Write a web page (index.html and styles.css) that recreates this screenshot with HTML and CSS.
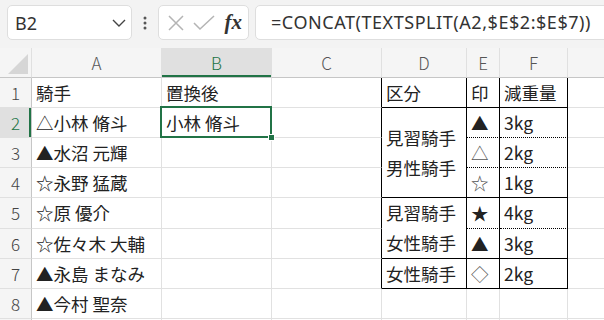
FILE: index.html
```html
<!DOCTYPE html>
<html>

<head>
    <title>減量騎手 置換</title>
    <link rel="stylesheet" href="styles.css">
</head>

<body>

    <div id="toolbar">
        <div id="name-box">
            <span>B2</span>
            <svg class="chev" width="14" height="8" viewBox="0 0 14 8"><polyline points="1,1 7,7 13,1" fill="none" stroke="#444" stroke-width="1.4"/></svg>
        </div>
        <div id="grip">
            <svg width="4" height="14" viewBox="0 0 4 14"><circle cx="2" cy="2" r="1.5" fill="#555"/><circle cx="2" cy="7" r="1.5" fill="#555"/><circle cx="2" cy="12" r="1.5" fill="#555"/></svg>
        </div>
        <div id="fx-buttons">
            <svg width="16" height="16" viewBox="0 0 16 16"><path d="M1 1 L15 15 M15 1 L1 15" stroke="#b4b4b4" stroke-width="1.5" fill="none"/></svg>
            <svg width="22" height="16" viewBox="0 0 22 16"><polyline points="1,8 7,14 21,1" stroke="#b4b4b4" stroke-width="1.5" fill="none"/></svg>
            <span class="fx">fx</span>
        </div>
        <div id="formula">=CONCAT(TEXTSPLIT(A2,$E$2:$E$7))</div>
    </div>

    <table id="sheet">
        <colgroup>
            <col class="w-rh"><col class="w-a"><col class="w-b"><col class="w-c">
            <col class="w-d"><col class="w-e"><col class="w-f"><col class="w-g">
        </colgroup>
        <thead>
            <tr>
                <th class="corner"><span class="tri"></span></th>
                <th>A</th>
                <th class="cur">B</th>
                <th>C</th>
                <th>D</th>
                <th>E</th>
                <th>F</th>
                <th></th>
            </tr>
        </thead>
        <tbody>
            <tr>
                <th>1</th>
                <td>騎手</td>
                <td>置換後</td>
                <td class="rb"></td>
                <td class="rb bb">区分</td>
                <td class="rb bb">印</td>
                <td class="rb bb">減重量</td>
                <td></td>
            </tr>
            <tr>
                <th class="cur">2</th>
                <td>△小林 脩斗</td>
                <td class="sel">小林 脩斗<span class="sel-box"></span><span class="handle"></span></td>
                <td class="rb"></td>
                <td class="rb bb multi" rowspan="3">見習騎手<br>男性騎手</td>
                <td class="rb bd mark">▲</td>
                <td class="rb bd">3kg</td>
                <td></td>
            </tr>
            <tr>
                <th>3</th>
                <td>▲水沼 元輝</td>
                <td></td>
                <td class="rb"></td>
                <td class="rb bd mark light">△</td>
                <td class="rb bd">2kg</td>
                <td></td>
            </tr>
            <tr>
                <th>4</th>
                <td>☆永野 猛蔵</td>
                <td></td>
                <td class="rb"></td>
                <td class="rb bb mark light">☆</td>
                <td class="rb bb">1kg</td>
                <td></td>
            </tr>
            <tr>
                <th>5</th>
                <td>☆原 優介</td>
                <td></td>
                <td class="rb"></td>
                <td class="rb bb multi" rowspan="2">見習騎手<br>女性騎手</td>
                <td class="rb bd mark">★</td>
                <td class="rb bd">4kg</td>
                <td></td>
            </tr>
            <tr>
                <th>6</th>
                <td>☆佐々木 大輔</td>
                <td></td>
                <td class="rb"></td>
                <td class="rb bb mark">▲</td>
                <td class="rb bb">3kg</td>
                <td></td>
            </tr>
            <tr>
                <th>7</th>
                <td>▲永島 まなみ</td>
                <td></td>
                <td class="rb"></td>
                <td class="rb bb">女性騎手</td>
                <td class="rb bb mark light">◇</td>
                <td class="rb bb">2kg</td>
                <td></td>
            </tr>
            <tr>
                <th>8</th>
                <td>▲今村 聖奈</td>
                <td></td>
                <td></td>
                <td></td>
                <td></td>
                <td></td>
                <td></td>
            </tr>
            <tr>
                <th></th>
                <td></td><td></td><td></td><td></td><td></td><td></td><td></td>
            </tr>
        </tbody>
    </table>

</body>

</html>
```

FILE: styles.css
```css
body {
    margin: 0;
    overflow: hidden;
    background-color: #f3f3f3;
    font-family: "Noto Sans CJK JP", sans-serif;
    color: #222;
}

#toolbar {
    display: flex;
    align-items: center;
    height: 48px;
    padding: 5px 0 8px 7px;
    box-sizing: border-box;
    width: 680px;
}

#name-box {
    display: flex;
    align-items: center;
    justify-content: space-between;
    width: 125px;
    height: 35px;
    box-sizing: border-box;
    padding: 0 5px 0 7px;
    background-color: white;
    border: 1px solid #dedede;
    border-radius: 5px;
    font-family: "Noto Sans", sans-serif;
    font-size: 18px;
    color: #333;
}

#grip {
    display: flex;
    justify-content: center;
    width: 26px;
}

#fx-buttons {
    display: flex;
    align-items: center;
    justify-content: space-between;
    width: 91px;
    height: 35px;
    box-sizing: border-box;
    padding: 0 6px 0 9px;
    background-color: white;
    border: 1px solid #dedede;
    border-radius: 5px;
}

.fx {
    font-family: "Liberation Serif", serif;
    font-style: italic;
    font-weight: bold;
    font-size: 21px;
    color: #333;
}

#formula {
    flex: 1;
    height: 35px;
    margin-left: 6px;
    box-sizing: border-box;
    padding-left: 15px;
    line-height: 33px;
    background-color: white;
    border: 1px solid #dedede;
    border-radius: 5px;
    font-family: "Noto Sans", sans-serif;
    font-size: 18px;
    letter-spacing: 0.55px;
    color: #333;
}

#sheet {
    table-layout: fixed;
    border-collapse: separate;
    border-spacing: 0;
    width: 640px;
    background-color: white;
    font-size: 17.5px;
}

.w-rh { width: 32px; }
.w-a { width: 130px; }
.w-b { width: 110px; }
.w-c { width: 110px; }
.w-d { width: 85px; }
.w-e { width: 33px; }
.w-f { width: 68px; }
.w-g { width: 72px; }

#sheet th,
#sheet td {
    height: 30px;
    padding: 0;
    box-sizing: border-box;
    white-space: nowrap;
    overflow: hidden;
}

#sheet thead th {
    background-color: #f5f5f5;
    border-right: 1px solid #e0e0e0;
    border-bottom: 1px solid #c6c6c6;
    font-weight: 300;
    font-size: 17px;
    color: #555;
}

#sheet thead th.cur {
    background-color: #e0e0e0;
    color: #217346;
    box-shadow: inset 0 -2px 0 #217346;
}

.corner {
    position: relative;
}

.tri {
    position: absolute;
    right: 3px;
    bottom: 3px;
    width: 0;
    height: 0;
    border-left: 20px solid transparent;
    border-bottom: 20px solid #d6d6d6;
}

#sheet tbody th {
    background-color: #f5f5f5;
    border-right: 1px solid #c6c6c6;
    border-bottom: 1px solid #e0e0e0;
    font-weight: 300;
    font-size: 17px;
    color: #444;
}

#sheet tbody th.cur {
    background-color: #e0e0e0;
    color: #217346;
    box-shadow: inset -2px 0 0 #217346;
}

#sheet td {
    padding-left: 4px;
    border-right: 1px solid #e1e1e1;
    border-bottom: 1px solid #e1e1e1;
    color: #222;
}

#sheet td.rb { border-right-color: black; }
#sheet td.bb { border-bottom-color: black; }
#sheet td.bd { border-bottom: 1px dotted black; }

#sheet td.multi {
    line-height: 30px;
    vertical-align: middle;
}

#sheet td.mark {
    padding-left: 4px;
}

#sheet td.light {
    color: #555;
}

#sheet td.sel {
    position: relative;
    overflow: visible;
}

.sel-box {
    position: absolute;
    top: -2px;
    left: -2px;
    right: -1px;
    bottom: -1px;
    border: 2px solid #217346;
}

.handle {
    position: absolute;
    right: -4px;
    bottom: -4px;
    width: 5px;
    height: 5px;
    background-color: #217346;
    border: 1px solid white;
}
```
